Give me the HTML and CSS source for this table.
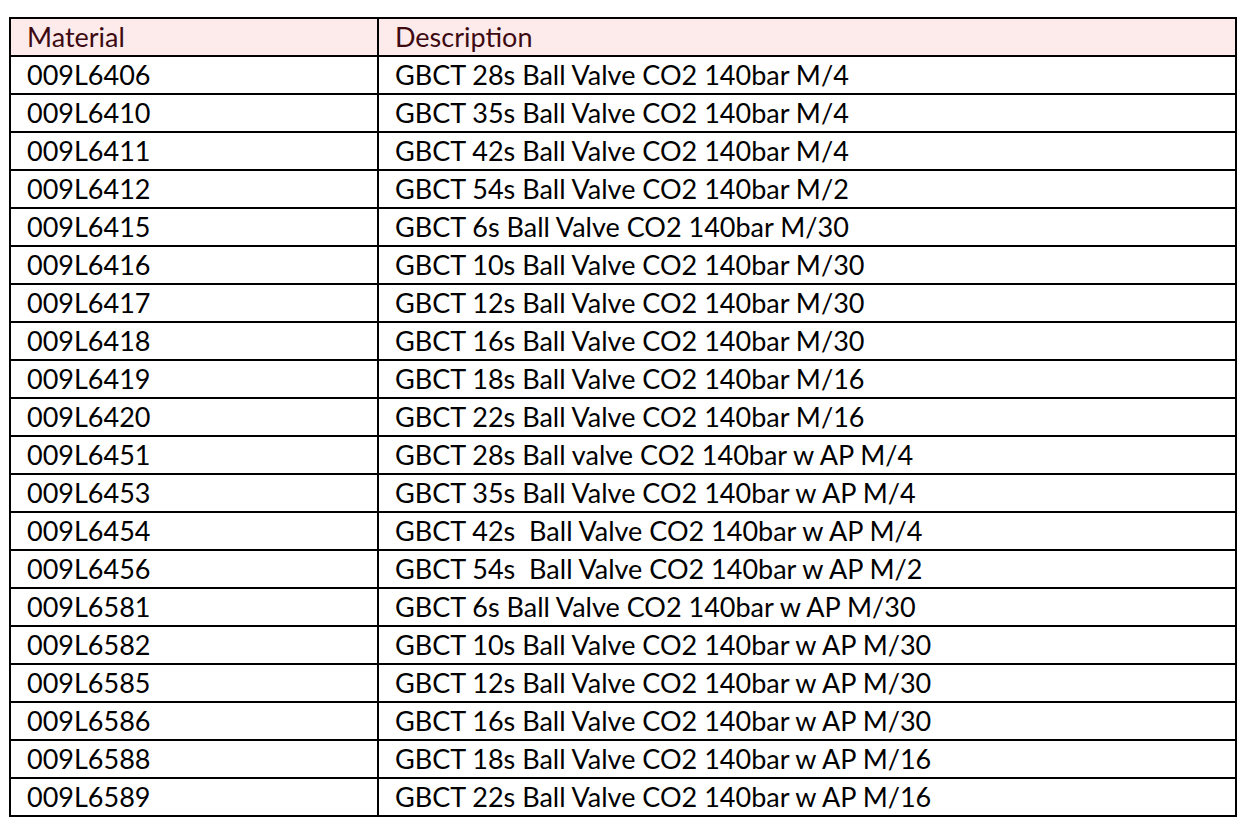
FILE: index.html
```html
<!DOCTYPE html>
<html>
<head>
<meta charset="utf-8">
<link rel="stylesheet" href="styles.css">
</head>
<body>
<table class="mat-table">
  <thead>
    <tr class="head"><th class="c1">Material</th><th class="c2">Description</th></tr>
  </thead>
  <tbody>
    <tr><td>009L6406</td><td>GBCT 28s Ball Valve CO2 140bar M/4</td></tr>
    <tr><td>009L6410</td><td>GBCT 35s Ball Valve CO2 140bar M/4</td></tr>
    <tr><td>009L6411</td><td>GBCT 42s Ball Valve CO2 140bar M/4</td></tr>
    <tr><td>009L6412</td><td>GBCT 54s Ball Valve CO2 140bar M/2</td></tr>
    <tr><td>009L6415</td><td>GBCT 6s Ball Valve CO2 140bar M/30</td></tr>
    <tr><td>009L6416</td><td>GBCT 10s Ball Valve CO2 140bar M/30</td></tr>
    <tr><td>009L6417</td><td>GBCT 12s Ball Valve CO2 140bar M/30</td></tr>
    <tr><td>009L6418</td><td>GBCT 16s Ball Valve CO2 140bar M/30</td></tr>
    <tr><td>009L6419</td><td>GBCT 18s Ball Valve CO2 140bar M/16</td></tr>
    <tr><td>009L6420</td><td>GBCT 22s Ball Valve CO2 140bar M/16</td></tr>
    <tr><td>009L6451</td><td>GBCT 28s Ball valve CO2 140bar w AP M/4</td></tr>
    <tr><td>009L6453</td><td>GBCT 35s Ball Valve CO2 140bar w AP M/4</td></tr>
    <tr><td>009L6454</td><td>GBCT 42s&nbsp; Ball Valve CO2 140bar w AP M/4</td></tr>
    <tr><td>009L6456</td><td>GBCT 54s&nbsp; Ball Valve CO2 140bar w AP M/2</td></tr>
    <tr><td>009L6581</td><td>GBCT 6s Ball Valve CO2 140bar w AP M/30</td></tr>
    <tr><td>009L6582</td><td>GBCT 10s Ball Valve CO2 140bar w AP M/30</td></tr>
    <tr><td>009L6585</td><td>GBCT 12s Ball Valve CO2 140bar w AP M/30</td></tr>
    <tr><td>009L6586</td><td>GBCT 16s Ball Valve CO2 140bar w AP M/30</td></tr>
    <tr><td>009L6588</td><td>GBCT 18s Ball Valve CO2 140bar w AP M/16</td></tr>
    <tr><td>009L6589</td><td>GBCT 22s Ball Valve CO2 140bar w AP M/16</td></tr>
  </tbody>
</table>
</body>
</html>
```
FILE: styles.css
```css
html, body {
  margin: 0;
  padding: 0;
  background: #ffffff;
}
body {
  padding: 17px 0 0 9px;
}
.mat-table {
  border-collapse: collapse;
  width: 1228px;
  table-layout: fixed;
  font-family: "Lato", "Open Sans", sans-serif;
  font-size: 27px;
  color: #000;
}
.mat-table th,
.mat-table td {
  border: 2px solid #000;
  height: 36px;
  padding: 0 0 0 16px;
  text-align: left;
  font-weight: normal;
  line-height: 36px;
  white-space: pre;
}
.mat-table th.c1 { width: 350px; }
.mat-table .head th {
  background: #fdeaea;
  color: #3d0a12;
}
```
